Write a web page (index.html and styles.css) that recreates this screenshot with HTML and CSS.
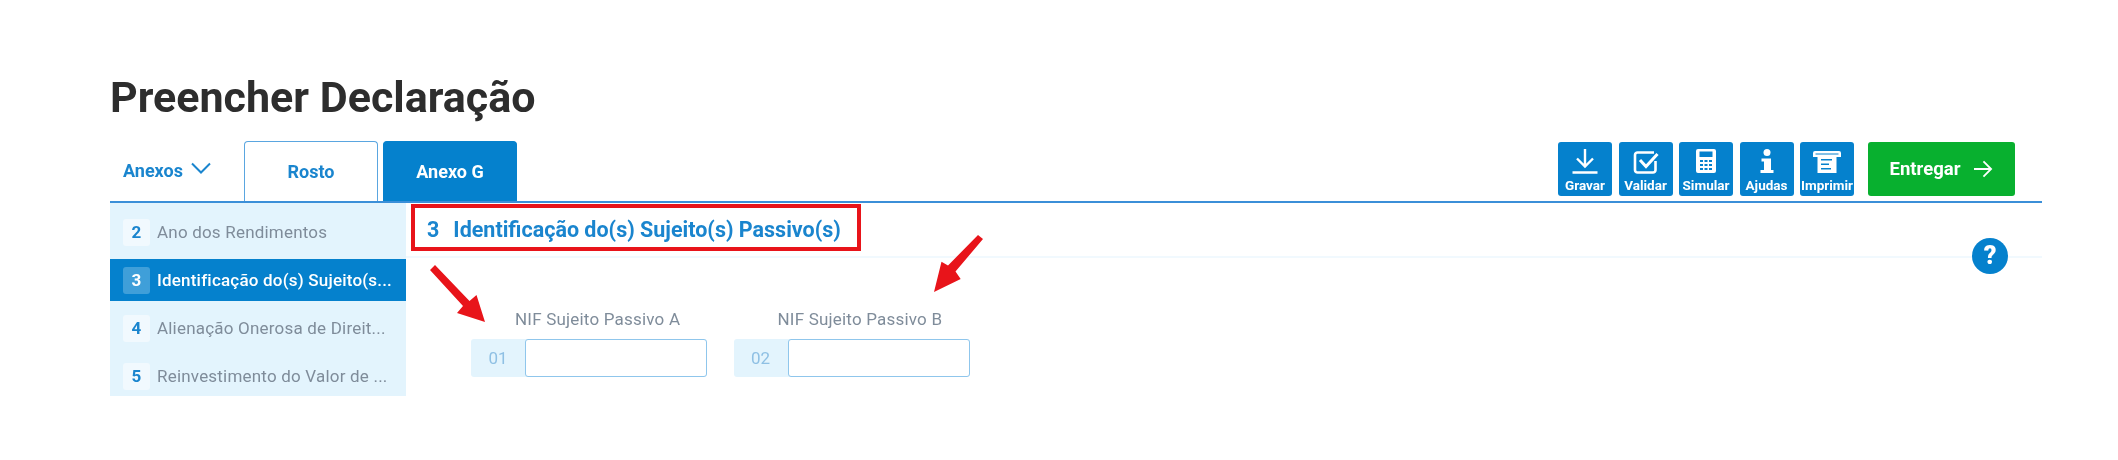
FILE: index.html
```html
<!DOCTYPE html>
<html lang="pt">
<head>
<meta charset="utf-8">
<title>Preencher Declaração</title>
<link rel="stylesheet" href="styles.css">
</head>
<body>
<main class="page">
  <h1 class="title">Preencher Declaração</h1>
  <div class="toolbar">
    <div class="tabs">
      <a class="annex-toggle">Anexos
        <svg class="chevron" viewBox="0 0 20 12"><path d="M1 1.500 10 10.500l9-9" fill="none" stroke="currentColor" stroke-width="2"/></svg>
      </a>
      <a class="tab">Rosto</a>
      <a class="tab tab-active">Anexo G</a>
    </div>
    <div class="actions">
      <button class="action">
        <svg viewBox="0 0 28 28"><path d="M14 1v17.500M6 10.500l8 8 8-8M1.500 24.500h25" fill="none" stroke="#fff" stroke-width="2.400"/></svg>
        <span>Gravar</span>
      </button>
      <button class="action">
        <svg viewBox="0 0 28 28"><path d="M23.500 13v9a2.500 2.500 0 0 1-2.500 2.500H5.500A2.500 2.500 0 0 1 3 22V7a2.500 2.500 0 0 1 2.500-2.500H22" fill="none" stroke="#fff" stroke-width="2.600"/><path d="M8 12l6 6.500L25.500 6" fill="none" stroke="#fff" stroke-width="3"/></svg>
        <span>Validar</span>
      </button>
      <button class="action">
        <svg viewBox="0 0 28 28"><path fill="#fff" fill-rule="evenodd" d="M6 1h16a2 2 0 0 1 2 2v20a2 2 0 0 1-2 2H6a2 2 0 0 1-2-2V3a2 2 0 0 1 2-2zm1.500 2.500V9h13V3.500zM8 12v2h3v-2zm4.500 0v2h3v-2zm4.500 0v2h3v-2zM8 16v2h3v-2zm4.500 0v2h3v-2zm4.500 0v2h3v-2zM8 20v2h3v-2zm4.500 0v2h3v-2zm4.500 0v2h3v-2z"/></svg>
        <span>Simular</span>
      </button>
      <button class="action">
        <svg viewBox="0 0 28 28"><circle cx="14" cy="4.500" r="3.500" fill="#fff"/><path fill="#fff" d="M8.500 10.500H18V22h2.500v3h-13v-3H11v-8.500H8.500z"/></svg>
        <span>Ajudas</span>
      </button>
      <button class="action">
        <svg viewBox="0 0 28 28"><path fill="#fff" fill-rule="evenodd" d="M2 3h24a2 2 0 0 1 2 2v4h-4.500v16h-19V9H0V5a2 2 0 0 1 2-2zm.500 2.500v1h23v-1zM8 11v1.500h11V11zm0 4.500V17h8v-1.500zM8 20v1.500h10V20z"/></svg>
        <span>Imprimir</span>
      </button>
      <button class="deliver">Entregar
        <svg viewBox="0 0 22 20"><path d="M1 10h19M11.500 1.500 20 10l-8.500 8.500" fill="none" stroke="#fff" stroke-width="2"/></svg>
      </button>
    </div>
  </div>

  <div class="workspace">
    <nav class="sidebar">
      <a class="side-item"><b class="num">2</b><span class="side-text">Ano dos Rendimentos</span></a>
      <a class="side-item side-active"><b class="num">3</b><span class="side-text">Identificação do(s) Sujeito(s...</span></a>
      <a class="side-item"><b class="num">4</b><span class="side-text">Alienação Onerosa de Direit...</span></a>
      <a class="side-item"><b class="num">5</b><span class="side-text">Reinvestimento do Valor de ...</span></a>
    </nav>
    <section class="content">
      <h2 class="section-title"><span class="section-num">3</span>Identificação do(s) Sujeito(s) Passivo(s)</h2>
      <a class="help">?</a>
      <div class="fields">
        <div class="field">
          <label class="field-label">NIF Sujeito Passivo A</label>
          <div class="field-row"><span class="code">01</span><input class="input" type="text"></div>
        </div>
        <div class="field">
          <label class="field-label">NIF Sujeito Passivo B</label>
          <div class="field-row"><span class="code">02</span><input class="input" type="text"></div>
        </div>
      </div>
      <div class="highlight"></div>
      <svg class="arrow arrow-a" viewBox="0 0 56 57"><path fill="#e8141a" d="M4 -1 38.500 35l7-6L54 56 26 47l6-7L-1 4z"/></svg>
      <svg class="arrow arrow-b" viewBox="0 0 50 57"><path fill="#e8141a" d="M45 -1l5 4-27.500 32.500 5.200 7.500L1 56l7.500-30.300 6.500 3.800z"/></svg>
    </section>
  </div>
</main>
</body>
</html>
```
FILE: styles.css
```css
* { box-sizing: border-box; }
html, body { margin: 0; background: #fff; }
body { font-family: Roboto, "Liberation Sans", sans-serif; overflow: hidden; }
a { display: block; }
.page { width: 2118px; height: 460px; padding: 72px 76px 0 110px; filter: blur(.4px); }
.title { margin: 0; height: 69px; font-size: 43px; line-height: 50px; font-weight: 700; color: #2d2d2d; }

.toolbar { display: flex; justify-content: space-between; align-items: flex-end; height: 62px; border-bottom: 2px solid #3b8fd8; }
.tabs { display: flex; height: 60px; align-items: stretch; }
.annex-toggle { width: 134px; padding-left: 13px; display: flex; align-items: center; gap: 8px; font-size: 18px; font-weight: 700; color: #1a85ce; padding-bottom: 2px; }
.chevron { width: 20px; height: 12px; margin-top: -4px; }
.tab { width: 134px; margin-right: 5px; border: 1px solid #5aa6e0; border-bottom: 0; border-radius: 4px 4px 0 0; display: flex; justify-content: center; align-items: center; font-size: 18px; font-weight: 700; color: #1a85ce; }
.tab-active { background: #0581cd; border-color: #0581cd; color: #fff; }

.actions { display: flex; align-self: flex-start; padding-top: 1px; margin-right: 27px; height: 54px; }
.action { width: 54px; height: 54px; margin-right: 6.500px; padding: 3px 0 0; border: 0; border-radius: 3px; background: #0581cd; color: #fff; font-family: inherit; font-size: 13.500px; line-height: 14px; font-weight: 700; display: flex; flex-direction: column; align-items: center; }
.action svg { width: 28px; height: 28px; margin: 3px 0 2px; flex: none; }
.action span { white-space: nowrap; }
.deliver { width: 147px; height: 54px; margin-left: 7.500px; border: 0; border-radius: 3px; background: #08b02f; color: #fff; font-family: inherit; font-size: 18.500px; font-weight: 700; display: flex; align-items: center; justify-content: center; gap: 13px; }
.deliver svg { width: 20px; height: 18px; }

.workspace { display: flex; align-items: flex-start; }
.sidebar { width: 296px; height: 193px; background: #e3f4fd; padding-top: 5px; overflow: hidden; }
.side-item { height: 48px; padding: 0 0 0 13px; display: flex; align-items: center; gap: 7px; font-size: 17px; color: #7f8c9a; }
.num { flex: none; width: 27px; height: 27px; border-radius: 3px; background: #f1f9fe; display: flex; align-items: center; justify-content: center; font-size: 17px; font-weight: 700; color: #1a85ce; }
.side-text { white-space: nowrap; letter-spacing: .2px; }
.side-active { height: 42px; margin: 3px 0; background: #0581cd; color: #fff; font-weight: 500; }
.side-active .num { background: #3f9fd9; color: #fff; }

.content { position: relative; flex: 1; height: 193px; }
.section-title { margin: 0; height: 55px; padding: 0 0 0 21px; border-bottom: 2px solid #f1f9fe; display: flex; align-items: center; font-size: 21.500px; font-weight: 700; color: #1a85ce; }
.section-num { margin-right: 14px; }
.help { position: absolute; right: 34px; top: 35px; width: 36px; height: 36px; border-radius: 50%; background: #0581cd; color: #fff; font-size: 25px; font-weight: 900; line-height: 36px; text-align: center; }
.fields { display: flex; gap: 26.500px; padding: 48px 0 0 65px; }
.field { width: 236px; }
.field-label { display: block; height: 33px; padding-left: 44px; font-size: 17px; line-height: 26px; color: #7f8c9a; letter-spacing: .2px; }
.field-row { display: flex; height: 38px; background: #e3f4fd; border-radius: 3px; }
.code { width: 54px; display: flex; align-items: center; justify-content: center; font-size: 17px; color: #8fc0e4; }
.input { flex: 1; min-width: 0; border: 1px solid #8fc6ec; border-radius: 3px; background: #fff; }

.highlight { position: absolute; left: 5px; top: 1px; width: 450px; height: 47px; border: 4px solid #e8141a; }
.arrow { position: absolute; overflow: visible; }
.arrow-a { left: 25px; top: 63px; width: 56px; height: 57px; }
.arrow-b { left: 527px; top: 33px; width: 50px; height: 57px; }
```
